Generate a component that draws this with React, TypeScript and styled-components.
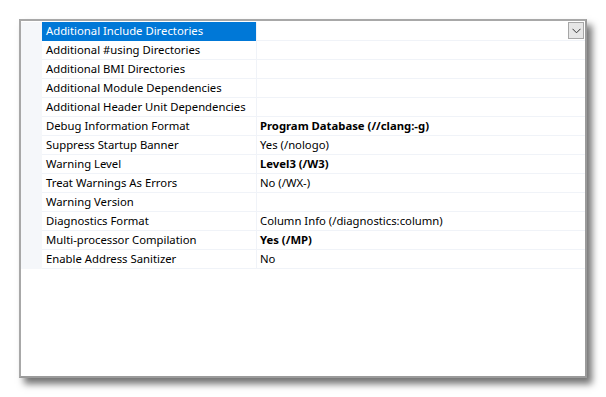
import React from "react";
import styled, { createGlobalStyle } from "styled-components";

const Global = createGlobalStyle`
  html, body { margin: 0; padding: 0; background: #ffffff; }
  body { font-family: "Noto Sans", "Segoe UI", sans-serif; }
`;

const Page = styled.div`
  padding: 19px 0 0 19px;
  width: 606px;
  height: 397px;
  box-sizing: border-box;
`;

const Window = styled.div`
  width: 568px;
  height: 359px;
  box-sizing: border-box;
  border: 2px solid #9b9b9b;
  border-top-color: #a8a8a8;
  border-left-color: #a8a8a8;
  background: #ffffff;
  box-shadow: 5px 6px 7px rgba(0, 0, 0, 0.55);
  padding-top: 1px;
`;

const Grid = styled.div`
  display: grid;
  grid-template-columns: 21px 214px 1px 1fr;
`;

const Gutter = styled.div`
  background: #f5f7fa;
  height: 19px;
`;

const NameCell = styled.div<{ $selected?: boolean }>`
  height: 19px;
  box-sizing: border-box;
  border-bottom: 1px solid ${(p) => (p.$selected ? "#0078d7" : "#f0f3f8")};
  background: ${(p) => (p.$selected ? "#0078d7" : "#ffffff")};
  color: ${(p) => (p.$selected ? "#ffffff" : "#000000")};
  font-size: 11.3px;
  line-height: 18px;
  padding-left: 4px;
  white-space: nowrap;
  overflow: hidden;
`;

const Sep = styled.div`
  background: #f0f3f8;
  height: 19px;
`;

const ValueCell = styled.div<{ $bold?: boolean }>`
  position: relative;
  height: 19px;
  box-sizing: border-box;
  border-bottom: 1px solid #f0f3f8;
  font-size: 11.3px;
  line-height: 18px;
  padding-left: 3px;
  font-weight: ${(p) => (p.$bold ? 700 : 400)};
  color: #000000;
  white-space: nowrap;
  overflow: hidden;
`;

const DropButton = styled.div`
  position: absolute;
  right: 1px;
  top: 0;
  width: 16px;
  height: 17px;
  box-sizing: border-box;
  border: 1px solid #a6a6a6;
  background: #e6e6e6;
  display: flex;
  align-items: center;
  justify-content: center;
`;

type Row = { name: string; value?: string; bold?: boolean; selected?: boolean };

const rows: Row[] = [
  { name: "Additional Include Directories", selected: true },
  { name: "Additional #using Directories" },
  { name: "Additional BMI Directories" },
  { name: "Additional Module Dependencies" },
  { name: "Additional Header Unit Dependencies" },
  { name: "Debug Information Format", value: "Program Database (//clang:-g)", bold: true },
  { name: "Suppress Startup Banner", value: "Yes (/nologo)" },
  { name: "Warning Level", value: "Level3 (/W3)", bold: true },
  { name: "Treat Warnings As Errors", value: "No (/WX-)" },
  { name: "Warning Version" },
  { name: "Diagnostics Format", value: "Column Info (/diagnostics:column)" },
  { name: "Multi-processor Compilation", value: "Yes (/MP)", bold: true },
  { name: "Enable Address Sanitizer", value: "No" },
];

export default function App() {
  return (
    <Page>
      <Global />
      <Window>
        <Grid>
          {rows.map((r, i) => (
            <React.Fragment key={i}>
              <Gutter />
              <NameCell $selected={r.selected}>{r.name}</NameCell>
              <Sep />
              <ValueCell $bold={r.bold}>
                {r.value ?? ""}
                {r.selected && (
                  <DropButton>
                    <svg width="9" height="6" viewBox="0 0 9 6">
                      <path d="M0.5 0.8 L4.5 4.8 L8.5 0.8" fill="none" stroke="#333" strokeWidth="1" />
                    </svg>
                  </DropButton>
                )}
              </ValueCell>
            </React.Fragment>
          ))}
        </Grid>
      </Window>
    </Page>
  );
}
